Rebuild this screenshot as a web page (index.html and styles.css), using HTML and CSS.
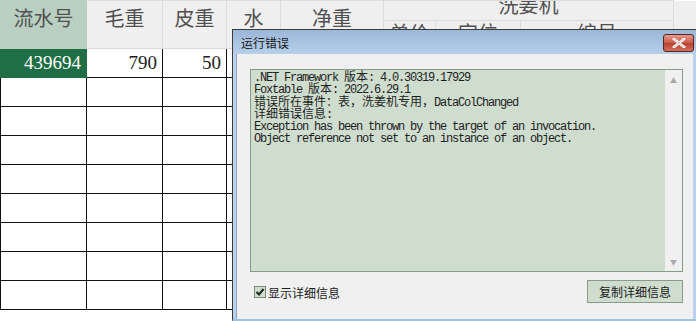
FILE: index.html
```html
<!DOCTYPE html>
<html lang="zh">
<head>
    <meta charset="UTF-8">
    <title>运行错误</title>
    <link rel="stylesheet" href="styles.css">
</head>
<body>
    <div id="sheet-wrap">
        <!-- Spreadsheet behind the dialog -->
        <table id="sheet">
            <colgroup>
                <col style="width:86px"><col style="width:76px"><col style="width:64px">
                <col style="width:54px"><col style="width:103px"><col style="width:52px">
                <col style="width:85px"><col style="width:153px"><col style="width:23px">
            </colgroup>
            <thead>
                <tr class="head-top">
                    <th rowspan="2" class="key">流水号</th>
                    <th rowspan="2">毛重</th>
                    <th rowspan="2">皮重</th>
                    <th rowspan="2">水</th>
                    <th rowspan="2">净重</th>
                    <th colspan="3" class="group"><span>洗姜机</span></th>
                    <th rowspan="2" class="filler"></th>
                </tr>
                <tr class="head-sub">
                    <th>单价</th>
                    <th>定位</th>
                    <th>编号</th>
                </tr>
            </thead>
            <tbody>
                <tr>
                    <td class="current">439694</td><td>790</td><td>50</td>
                    <td></td><td></td><td></td><td></td><td></td><td class="filler"></td>
                </tr>
                <tr><td></td><td></td><td></td><td></td><td></td><td></td><td></td><td></td><td class="filler"></td></tr>
                <tr><td></td><td></td><td></td><td></td><td></td><td></td><td></td><td></td><td class="filler"></td></tr>
                <tr><td></td><td></td><td></td><td></td><td></td><td></td><td></td><td></td><td class="filler"></td></tr>
                <tr><td></td><td></td><td></td><td></td><td></td><td></td><td></td><td></td><td class="filler"></td></tr>
                <tr><td></td><td></td><td></td><td></td><td></td><td></td><td></td><td></td><td class="filler"></td></tr>
                <tr><td></td><td></td><td></td><td></td><td></td><td></td><td></td><td></td><td class="filler"></td></tr>
                <tr><td></td><td></td><td></td><td></td><td></td><td></td><td></td><td></td><td class="filler"></td></tr>
                <tr><td></td><td></td><td></td><td></td><td></td><td></td><td></td><td></td><td class="filler"></td></tr>
            </tbody>
        </table>

        <!-- Error dialog, floats over the sheet -->
        <div id="dialog">
            <div class="titlebar">
                <span class="title">运行错误</span>
                <button class="close-btn">
                    <svg width="16" height="10" viewBox="0 0 16 10">
                        <path d="M3 1 L13 9 M13 1 L3 9" stroke="#fff" stroke-width="2.6" stroke-linecap="square"/>
                        <path d="M3 1 L13 9 M13 1 L3 9" stroke="#8a3a34" stroke-width="0.6" fill="none" opacity="0.5"/>
                    </svg>
                </button>
            </div>
            <div class="dialog-body">
                <div class="details">
                    <div class="details-text">.NET Framework <span class="cjk">版本</span>: 4.0.30319.17929
Foxtable <span class="cjk">版本</span>: 2022.6.29.1
<span class="cjk">错误所在事件：表，洗姜机专用，</span>DataColChanged
<span class="cjk">详细错误信息</span>:
Exception has been thrown by the target of an invocation.
Object reference not set to an instance of an object.</div>
                    <div class="scrollbar">
                        <span class="arrow">&#9650;</span>
                        <span class="arrow">&#9660;</span>
                    </div>
                </div>
                <div class="footer">
                    <label class="check">
                        <span class="box">
                            <svg width="10" height="10" viewBox="0 0 10 10">
                                <path d="M1.5 5 L4 7.5 L8.5 2" stroke="#1c2a1c" stroke-width="2" fill="none"/>
                            </svg>
                        </span>
                        显示详细信息
                    </label>
                    <button class="copy-btn">复制详细信息</button>
                </div>
            </div>
        </div>
    </div>
</body>
</html>
```

FILE: styles.css
```css
body {
    margin: 0;
    overflow: hidden;
    background: #fff;
    font-family: "Noto Sans CJK SC", sans-serif;
}

#sheet-wrap {
    position: relative;
    width: 696px;
    height: 321px;
    overflow: hidden;
}

#sheet {
    border-collapse: collapse;
    table-layout: fixed;
    width: 696px;
}

#sheet th {
    background: #efefef;
    border: 1px solid #dcdcdc;
    color: #505050;
    font-weight: normal;
    font-size: 20px;
    padding: 0;
    text-align: center;
    overflow: hidden;
    white-space: nowrap;
}

.head-top {
    height: 20px;
}

.head-top th[rowspan] {
    vertical-align: top;
    line-height: 34px;
}

.head-sub {
    height: 28px;
}

#sheet th.key {
    background: #b8cfc1;
    border-color: #b8cfc1;
}

#sheet th.group span {
    display: block;
    line-height: 20px;
    margin-top: -12px;
}

.head-sub th {
    vertical-align: top;
    line-height: 24px;
}

#sheet th.filler,
#sheet td.filler {
    background: #efefef;
    border: none;
}

#sheet td {
    height: 28px;
    border: 1px solid #111;
    padding: 0 5px;
    font-family: "Liberation Serif", serif;
    font-size: 19px;
    color: #222;
    text-align: right;
    overflow: hidden;
}

#sheet tbody tr:first-child td {
    border-top: none;
}

#sheet td.current {
    background: #1f6e45;
    color: #fff;
    border-color: #1f6e45;
}

/* dialog */
#dialog {
    position: absolute;
    left: 232px;
    top: 29px;
    width: 463px;
    height: 289px;
    border: 1px solid #3c3c3c;
    border-bottom: 3px solid #9fc4e2;
    border-right-color: #8aa5c4;
    background: #b9d1ea;
    display: flex;
    flex-direction: column;
}

.titlebar {
    height: 24px;
    display: flex;
    align-items: center;
    justify-content: space-between;
    padding: 0 2px 0 8px;
    background: linear-gradient(#9bb7d8, #b7cfe9);
}

.title {
    font-size: 12px;
    color: #1a1a1a;
}

.close-btn {
    width: 31px;
    height: 18px;
    margin-top: 1px;
    padding: 0;
    border: 1px solid #5c2420;
    border-radius: 3px;
    background: linear-gradient(#e39a8c, #cc5a48 50%, #b8402f 51%, #d2705c);
    display: flex;
    align-items: center;
    justify-content: center;
}

.dialog-body {
    flex: 1;
    margin: 0 3px;
    background: #f0f0f0;
    border-left: 1px solid #8aa5c4;
    padding: 15px 13px 10px 13px;
    display: flex;
    flex-direction: column;
}

.details {
    width: 433px;
    height: 203px;
    box-sizing: border-box;
    border: 1px solid #889b88;
    background: #cfddcf;
    display: flex;
}

.details-text {
    flex: 1;
    padding: 2px 3px;
    white-space: pre;
    font-family: "Liberation Mono", "Noto Sans CJK SC", monospace;
    font-size: 12px;
    letter-spacing: -1.2px;
    line-height: 12.3px;
    color: #1e1e1e;
    overflow: hidden;
}

.details-text .cjk {
    letter-spacing: 0;
}

.scrollbar {
    width: 17px;
    background: #f0f0f0;
    display: flex;
    flex-direction: column;
    justify-content: space-between;
    align-items: center;
    padding: 6px 0 5px;
}

.arrow {
    font-size: 7px;
    color: #a8a8a8;
    line-height: 8px;
}

.footer {
    display: flex;
    justify-content: space-between;
    align-items: center;
    width: 433px;
    margin-top: 8px;
}

.check {
    display: flex;
    align-items: center;
    gap: 2px;
    font-size: 12px;
    color: #1a1a1a;
    padding: 1px 0 0 4px;
}

.box {
    width: 10px;
    height: 10px;
    border: 1px solid #7a8a7a;
    background: #cfddcf;
    display: flex;
    align-items: center;
    justify-content: center;
}

.copy-btn {
    width: 96px;
    height: 23px;
    border: 1px solid #889b88;
    background: #cfddcf;
    font-family: "Noto Sans CJK SC", sans-serif;
    font-size: 12px;
    color: #1a1a1a;
    padding: 0;
}
```
